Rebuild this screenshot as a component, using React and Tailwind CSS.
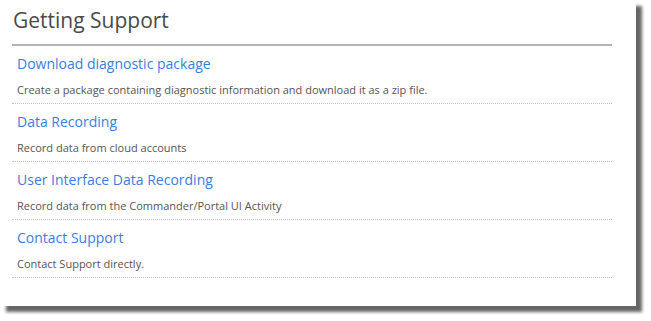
const items = [
  { title: "Download diagnostic package", desc: "Create a package containing diagnostic information and download it as a zip file." },
  { title: "Data Recording", desc: "Record data from cloud accounts" },
  { title: "User Interface Data Recording", desc: "Record data from the Commander/Portal UI Activity" },
  { title: "Contact Support", desc: "Contact Support directly." },
]

const App = () => {
  return (
    <div className="w-[651px] h-[321px] bg-white font-['Open_Sans',sans-serif]">
      <div className="w-[636px] h-[306px] bg-white shadow-[6px_6px_3px_rgba(0,0,0,0.6)] pl-3">
        <div className="w-[600px]">
          <h1 className="h-[44px] pt-[6px] text-[21px] leading-[28px] text-[#4a4a4a] pl-px">Getting Support</h1>
          <div className="h-[2px] bg-[#b2b2b2]" />
          {items.map((item) => (
            <div key={item.title} className="pt-2 pb-[5px] pl-[5px] border-b border-dotted border-[#c4c4c4]">
              <a href="#" className="block h-5 leading-5 text-[14px] text-[#3c7ddb]">{item.title}</a>
              <p className="mt-2 h-4 leading-4 text-[11px] text-[#555]">{item.desc}</p>
            </div>
          ))}
        </div>
      </div>
    </div>
  )
}

export default App
